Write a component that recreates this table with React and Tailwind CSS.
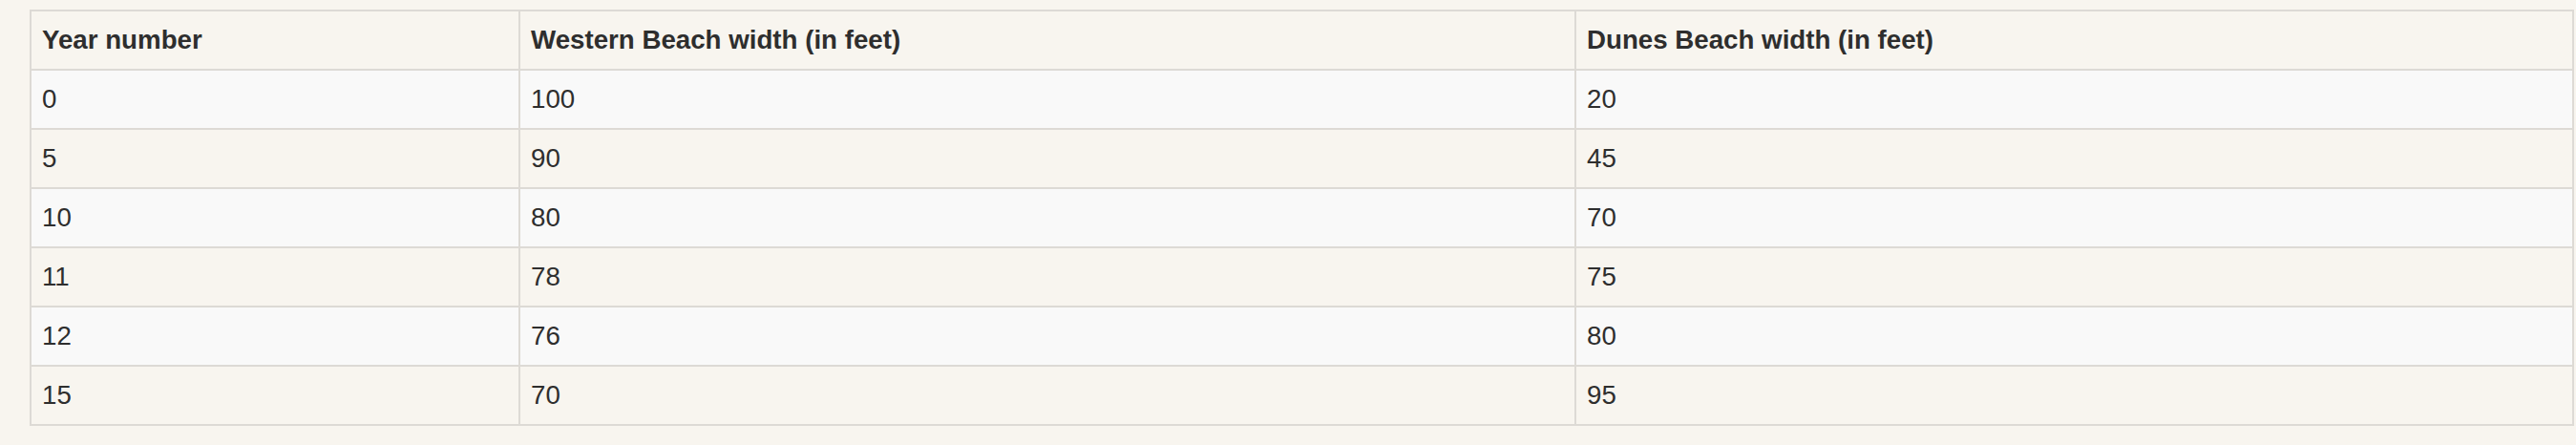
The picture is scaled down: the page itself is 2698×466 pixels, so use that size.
import React from "react";

const rows = [
  ["0", "100", "20"],
  ["5", "90", "45"],
  ["10", "80", "70"],
  ["11", "78", "75"],
  ["12", "76", "80"],
  ["15", "70", "95"],
];

export default function App() {
  return (
    <div
      className="w-[2698px] h-[466px] bg-[#f8f5ef] pt-[10px] pl-[31px] text-[#2e2e2e]"
      style={{ fontFamily: '"Liberation Sans", Arial, sans-serif' }}
    >
      <table className="border-collapse w-[2663px] table-fixed text-[27.7px] leading-[34px]">
        <colgroup>
          <col className="w-[512px]" />
          <col className="w-[1106px]" />
          <col className="w-[1045px]" />
        </colgroup>
        <thead>
          <tr className="bg-[#f8f5ef]">
            {["Year number", "Western Beach width (in feet)", "Dunes Beach width (in feet)"].map((h) => (
              <th
                key={h}
                className="border-2 border-[#dddad5] text-left font-bold px-[11px] py-[12.5px] h-[62px]"
              >
                {h}
              </th>
            ))}
          </tr>
        </thead>
        <tbody>
          {rows.map((r, i) => (
            <tr key={i} className={i % 2 === 0 ? "bg-[#f9f9f9]" : "bg-[#f8f5ef]"}>
              {r.map((c, j) => (
                <td
                  key={j}
                  className="border-2 border-[#dddad5] text-left font-normal px-[11px] py-[12.5px] h-[62px]"
                >
                  {c}
                </td>
              ))}
            </tr>
          ))}
        </tbody>
      </table>
    </div>
  );
}
